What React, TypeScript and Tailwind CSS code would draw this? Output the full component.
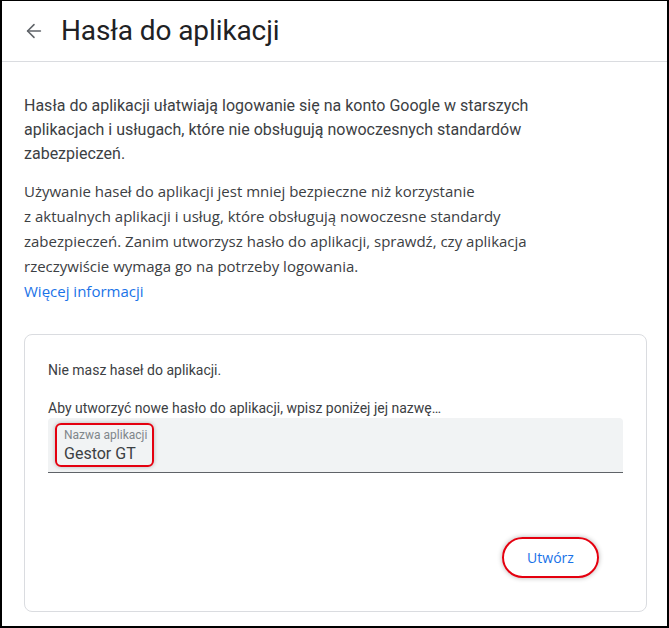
import { ArrowLeft } from "lucide-react";

export default function App() {
  return (
    <div className="w-[669px] h-[628px] bg-white border-black border-x-2 border-b-2 border-t overflow-hidden font-['Roboto',sans-serif] text-[#3c4043]">
      <div className="h-[61px] flex items-center border-b border-[#dadce0]">
        <button className="ml-[20px] w-[24px] h-[24px] flex items-center justify-center text-[#5f6368]">
          <ArrowLeft size={22} strokeWidth={1.7} />
        </button>
        <h1 className="ml-[15px] text-[28px] leading-none text-[#202124] tracking-[-0.1px]">
          Hasła do aplikacji
        </h1>
      </div>

      <div className="px-[22px] pt-[32px]">
        <p className="text-[16px] leading-[24px] w-[540px]">
          Hasła do aplikacji ułatwiają logowanie się na konto Google w starszych
          aplikacjach i usługach, które nie obsługują nowoczesnych standardów
          zabezpieczeń.
        </p>
        <p className="mt-[13px] font-['Open_Sans',sans-serif] text-[15px] leading-[25px]">
          Używanie haseł do aplikacji jest mniej bezpieczne niż korzystanie
          <br />z aktualnych aplikacji i usług, które obsługują nowoczesne standardy
          <br />
          zabezpieczeń. Zanim utworzysz hasło do aplikacji, sprawdź, czy aplikacja
          <br />
          rzeczywiście wymaga go na potrzeby logowania.
          <br />
          <a className="text-[#1a73e8]" href="#">
            Więcej informacji
          </a>
        </p>

        <div className="mt-[30px] w-[623px] h-[278px] border border-[#dadce0] rounded-[8px] px-[23px] pt-[25px]">
          <p className="text-[14px] leading-[20px]">Nie masz haseł do aplikacji.</p>
          <p className="mt-[18px] text-[14px] leading-[20px]">
            Aby utworzyć nowe hasło do aplikacji, wpisz poniżej jej nazwę…
          </p>
          <div className="h-[55px] bg-[#f1f3f4] rounded-t-[4px] border-b border-[#5f6368] pl-[7px] pt-[4px]">
            <div className="inline-flex flex-col w-[99px] h-[44px] border-2 border-[#e4000f] rounded-[6px] pl-[7px] pt-[2px] shadow-[0_0_4px_rgba(0,0,0,0.25)]">
              <span className="text-[12px] leading-[16px] text-[#80868b]">Nazwa aplikacji</span>
              <span className="text-[16px] leading-[22px] font-normal text-[#3c4043]">Gestor GT</span>
            </div>
          </div>
          <div className="flex justify-end pr-[24px] mt-[64px]">
            <button className="w-[97px] h-[41px] rounded-full border-2 border-[#e4000f] shadow-[0_0_5px_rgba(0,0,0,0.3)] font-['Open_Sans',sans-serif] text-[14px] font-medium text-[#1a73e8]">
              Utwórz
            </button>
          </div>
        </div>
      </div>
    </div>
  );
}
